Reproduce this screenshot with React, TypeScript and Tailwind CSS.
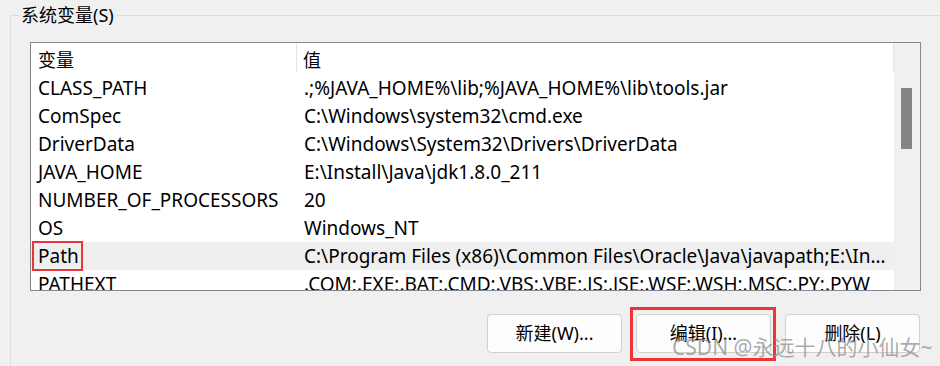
import React from 'react';

const rows: { name: string; value: string }[] = [
  { name: 'CLASS_PATH', value: '.;%JAVA_HOME%\\lib;%JAVA_HOME%\\lib\\tools.jar' },
  { name: 'ComSpec', value: 'C:\\Windows\\system32\\cmd.exe' },
  { name: 'DriverData', value: 'C:\\Windows\\System32\\Drivers\\DriverData' },
  { name: 'JAVA_HOME', value: 'E:\\Install\\Java\\jdk1.8.0_211' },
  { name: 'NUMBER_OF_PROCESSORS', value: '20' },
  { name: 'OS', value: 'Windows_NT' },
  { name: 'Path', value: 'C:\\Program Files (x86)\\Common Files\\Oracle\\Java\\javapath;E:\\Install\\Java\\jdk1.8.0_211\\bin' },
  { name: 'PATHEXT', value: ' .COM;.EXE;.BAT;.CMD;.VBS;.VBE;.JS;.JSE;.WSF;.WSH;.MSC;.PY;.PYW' },
];

const font = "font-['Noto_Sans','Noto_Sans_CJK_SC',sans-serif]";

const App: React.FC = () => {
  return (
    <div className={`relative w-[940px] h-[366px] overflow-hidden bg-[#f0f0f0] text-black ${font}`}>
      {/* group box */}
      <div className="relative ml-[10px] mt-[15px] h-[351px] border-l border-t border-[#dcdcdc] pl-[19px] pt-[26px]">
        <span className="absolute left-[8px] -top-[12px] bg-[#f0f0f0] px-[2px] text-[18px] leading-[22px]">
          系统变量(S)
        </span>

        {/* list */}
        <div className="flex w-[891px] h-[249px] border border-[#828790] bg-white overflow-hidden">
          <div className="flex-1 min-w-0 flex flex-col">
            <div className="flex h-[31px] shrink-0 text-[18px]">
              <div className="w-[266px] pl-[7px] pt-[3px] border-r border-[#e5e5e5] my-[1px]">变量</div>
              <div className="flex-1 pl-[6px] pt-[3px] border-r border-[#e5e5e5] my-[1px]">值</div>
            </div>
            {rows.map((r) => (
              <div
                key={r.name}
                className={`flex h-[28px] shrink-0 items-center text-[19px] whitespace-nowrap ${
                  r.name === 'Path' ? 'bg-[#efefef]' : ''
                }`}
              >
                <div className="w-[267px] shrink-0 pl-[7px]">
                  {r.name === 'Path' ? (
                    <span className="relative">
                      {r.name}
                      <span className="absolute -left-[6px] -top-[2px] w-[51px] h-[30px] border-2 border-[#e8383d]" />
                    </span>
                  ) : (
                    r.name
                  )}
                </div>
                <div className="flex-1 min-w-0 pl-[6px] pr-[8px] truncate">{r.value}</div>
              </div>
            ))}
          </div>
          {/* scrollbar */}
          <div className="w-[26px] shrink-0 bg-[#f0f0f0] pl-[7px] pt-[45px]">
            <div className="w-[11px] h-[61px] bg-[#858585]" />
          </div>
        </div>

        {/* buttons */}
        <div className="flex justify-end gap-[14px] w-[890px] mt-[23px] text-[18px]">
          <button className="w-[135px] h-[39px] rounded-[4px] border border-[#d0d0d0] bg-[#fdfdfd]">新建(W)...</button>
          <div className="relative">
            <button className="w-[135px] h-[39px] rounded-[4px] border border-[#d0d0d0] bg-[#fdfdfd]">编辑(I)...</button>
            <span className="absolute -left-[6px] -top-[7px] w-[146px] h-[54px] border-[3px] border-[#ee3535]" />
          </div>
          <button className="w-[135px] h-[39px] rounded-[4px] border border-[#d0d0d0] bg-[#fdfdfd]">删除(L)</button>
        </div>
      </div>

      {/* watermark */}
      <span className="absolute left-[672px] top-[334px] text-[21px] leading-[26px] text-[#909090]/75 whitespace-nowrap">
        CSDN @永远十八的小仙女~
      </span>
    </div>
  );
};

export default App;
